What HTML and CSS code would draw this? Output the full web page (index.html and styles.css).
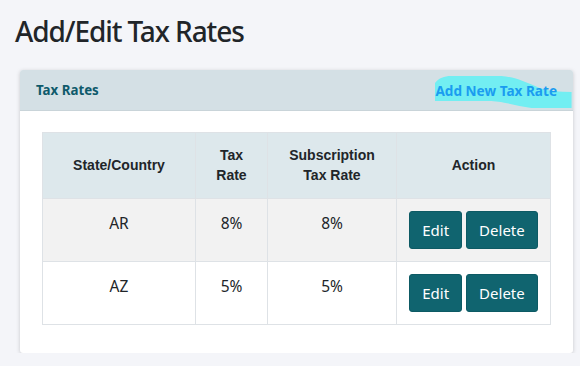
FILE: index.html
```html
<!DOCTYPE html>
<html lang="en">
<head>
<meta charset="utf-8">
<title>Add/Edit Tax Rates</title>
<link rel="stylesheet" href="styles.css">
</head>
<body>
<main class="page">
  <h1 class="page-title">Add/Edit Tax Rates</h1>
  <section class="card">
    <header class="card-header">
      <span class="card-title">Tax Rates</span>
      <a class="add-link" href="#">
        <svg class="marker" viewBox="0 0 136 34" preserveAspectRatio="none" aria-hidden="true">
          <path d="M0 8 C4 3 9 1 16 1 L66 1 C80 2 90 7 104 13 C114 16 124 17 136 17 L136 33 L96 33 C82 31 70 27 56 26 L0 26 Z" fill="#72eef2"/>
        </svg>
        <span class="add-text">Add New Tax Rate</span>
      </a>
    </header>
    <div class="card-body">
      <table class="rates">
        <thead>
          <tr>
            <th class="c-state">State/Country</th>
            <th class="c-rate">Tax<br>Rate</th>
            <th class="c-sub">Subscription<br>Tax Rate</th>
            <th class="c-action">Action</th>
          </tr>
        </thead>
        <tbody>
          <tr class="striped">
            <td>AR</td>
            <td>8%</td>
            <td>8%</td>
            <td><div class="actions"><button class="btn">Edit</button><button class="btn">Delete</button></div></td>
          </tr>
          <tr>
            <td>AZ</td>
            <td>5%</td>
            <td>5%</td>
            <td><div class="actions"><button class="btn">Edit</button><button class="btn">Delete</button></div></td>
          </tr>
        </tbody>
      </table>
    </div>
  </section>
</main>
</body>
</html>
```

FILE: styles.css
```css
* { box-sizing: border-box; }

html, body {
  margin: 0;
  background: #f4f5f9;
}

body {
  font-family: "Noto Sans", "Open Sans", sans-serif;
  color: #212529;
}

.page {
  padding: 13px 7px 0 20px;
}

.page-title {
  margin: 0 0 21px -5px;
  font-size: 28px;
  font-weight: 500;
  letter-spacing: -1.1px;
  line-height: 36px;
  color: #212529;
}

.card {
  background: #ffffff;
  border-radius: 3px;
  box-shadow: 0 1px 4px rgba(0, 0, 0, 0.18);
}

.card-header {
  display: flex;
  justify-content: space-between;
  align-items: center;
  height: 41px;
  padding: 0 16px 0 16px;
  background: #d4e0e5;
  border-bottom: 1px solid #c9d4d9;
  border-radius: 3px 3px 0 0;
}

.card-title {
  font-size: 13.3px;
  font-weight: 700;
  color: #0e5a6b;
}

.add-link {
  position: relative;
  display: inline-block;
  line-height: 20px;
  text-decoration: none;
}

.marker {
  position: absolute;
  left: 0;
  top: -5px;
  width: calc(100% + 15px);
  height: 34px;
}

.add-text {
  position: relative;
  font-size: 13.6px;
  font-weight: 700;
  color: #1a9cf0;
}

.card-body {
  padding: 21px 22px 28px 22px;
}

.rates {
  width: 100%;
  border-collapse: collapse;
  border: 1px solid #dee2e6;
  font-size: 15.5px;
}

.rates th {
  font-family: "Liberation Sans", Arial, sans-serif;
  font-size: 14px;
  font-weight: 700;
  line-height: 20px;
  padding: 12px 8px 13px;
  background: #dde8ec;
  border: 1px solid #dee2e6;
  text-align: center;
  vertical-align: middle;
}

.c-state { width: 153px; }
.c-rate { width: 72px; }
.c-sub { width: 129px; }

.rates td {
  height: 63px;
  padding: 12px 8px 11px;
  border: 1px solid #dee2e6;
  text-align: center;
  vertical-align: top;
  line-height: 24px;
}

.striped td {
  background: #f2f2f2;
}

.actions {
  display: flex;
  justify-content: center;
  gap: 4px;
}

.btn {
  height: 38px;
  padding: 0 12px;
  font-family: "Noto Sans", "Open Sans", sans-serif;
  font-size: 15px;
  color: #ffffff;
  background: #10646f;
  border: 1px solid #0d5a64;
  border-radius: 3px;
}
```
